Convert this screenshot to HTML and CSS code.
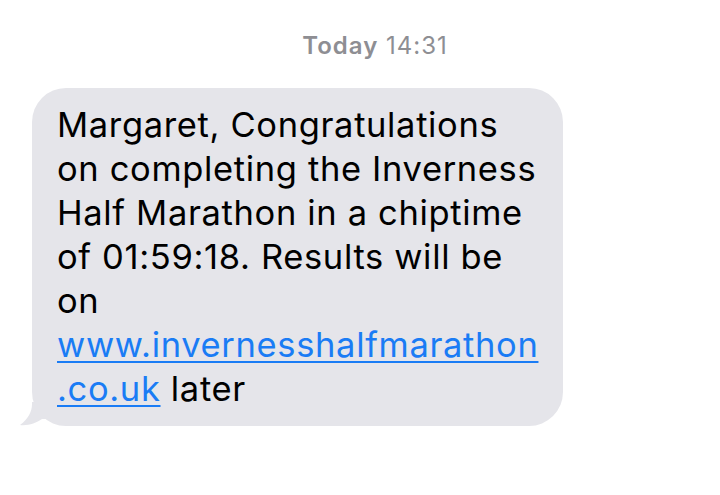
FILE: index.html
```html
<!DOCTYPE html>
<html>
<head>
<meta charset="utf-8">
<link rel="stylesheet" href="styles.css">
</head>
<body>
<div class="thread">
  <div class="stamp"><b>Today</b> 14:31</div>
  <div class="row">
    <div class="bubble">
      <svg class="tail" width="30" height="24" viewBox="0 0 30 24"><path d="M12 0 L12 2 C12 10 8 17 0 23 C8 24 16 21 22 17 L30 17 L30 0 Z" fill="#e5e5ea"/></svg>
      <p class="msg">Margaret, Congratulations<br>on completing the Inverness<br>Half Marathon in a chiptime<br>of 01:59:18. Results will be<br>on<br><a href="#">www.invernesshalfmarathon<br>.co.uk</a> later</p>
    </div>
  </div>
</div>
</body>
</html>
```
FILE: styles.css
```css
html, body { margin: 0; padding: 0; background: #fff; }
body { font-family: Inter, "Noto Sans", sans-serif; width: 720px; height: 495px; overflow: hidden; }
.thread { padding-top: 31px; }
.stamp {
  text-align: center;
  padding-left: 30px;
  font-size: 24px;
  line-height: 30px;
  color: #8e8e93;
  font-weight: 400;
  letter-spacing: 1px;
}
.stamp b { font-weight: 600; }
.row { padding-top: 27px; padding-left: 32px; }
.bubble {
  position: relative;
  width: 531px;
  box-sizing: border-box;
  background: #e5e5ea;
  border-radius: 34px;
  padding: 15px 10px 15px 25px;
}
.tail { position: absolute; left: -12px; bottom: 0; display: block; }
.msg {
  margin: 0;
  font-size: 34.5px;
  line-height: 44px;
  color: #000;
  letter-spacing: 0.65px;
}
.msg a { color: #1a7cf5; text-decoration: underline; text-decoration-thickness: 2px; text-underline-offset: 4px; }
```
